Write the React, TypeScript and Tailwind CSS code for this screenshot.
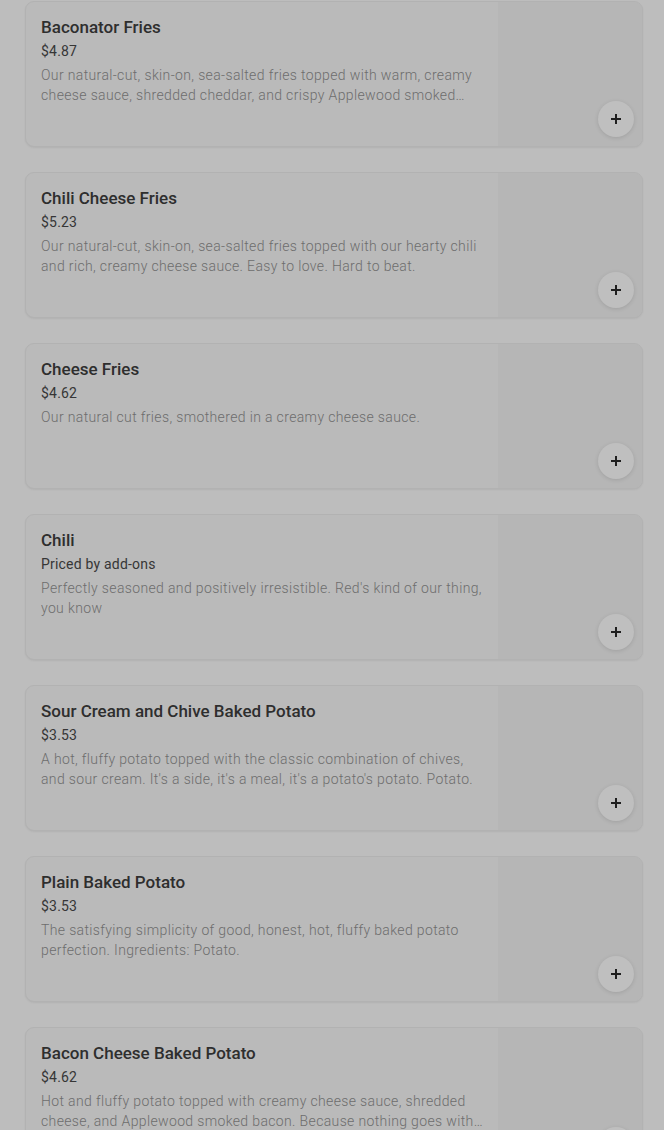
import React from 'react';

const items = [
  {
    name: 'Baconator Fries',
    price: '$4.87',
    desc: 'Our natural-cut, skin-on, sea-salted fries topped with warm, creamy cheese sauce, shredded cheddar, and crispy Applewood smoked bacon. Because nothing goes with fries like bacon.',
  },
  {
    name: 'Chili Cheese Fries',
    price: '$5.23',
    desc: 'Our natural-cut, skin-on, sea-salted fries topped with our hearty chili and rich, creamy cheese sauce. Easy to love. Hard to beat.',
  },
  {
    name: 'Cheese Fries',
    price: '$4.62',
    desc: 'Our natural cut fries, smothered in a creamy cheese sauce.',
  },
  {
    name: 'Chili',
    price: 'Priced by add-ons',
    desc: "Perfectly seasoned and positively irresistible. Red's kind of our thing, you know",
  },
  {
    name: 'Sour Cream and Chive Baked Potato',
    price: '$3.53',
    desc: "A hot, fluffy potato topped with the classic combination of chives, and sour cream. It's a side, it's a meal, it's a potato's potato. Potato.",
  },
  {
    name: 'Plain Baked Potato',
    price: '$3.53',
    desc: 'The satisfying simplicity of good, honest, hot, fluffy baked potato perfection. Ingredients: Potato.',
  },
  {
    name: 'Bacon Cheese Baked Potato',
    price: '$4.62',
    desc: 'Hot and fluffy potato topped with creamy cheese sauce, shredded cheese, and Applewood smoked bacon. Because nothing goes with potatoes like bacon.',
  },
];

export default function App() {
  return (
    <div className="h-[1130px] overflow-hidden bg-[#bdbdbd] pl-[25px] pr-[21px] pt-px font-['Roboto',sans-serif] flex flex-col gap-[25px]">
      {items.map((item) => (
        <div
          key={item.name}
          className="flex h-[146px] shrink-0 rounded-[9px] border border-[#b2b2b2] bg-[#bababa] overflow-hidden shadow-[0_1px_2px_rgba(0,0,0,0.06)]"
        >
          <div className="flex-1 min-w-0 pl-[15px] pr-[14px] pt-[14px]">
            <h3 className="text-[17px] leading-[22px] font-medium text-[#2e2e2e]">{item.name}</h3>
            <p className="mt-[3px] text-[14px] leading-[20px] tracking-[0.2px] text-[#363636]">{item.price}</p>
            <p className="mt-1 text-[14px] leading-[20px] tracking-[0.36px] font-light text-[#6d6d6d] line-clamp-2">
              {item.desc}
            </p>
          </div>
          <div className="relative w-[144px] shrink-0 bg-[#b6b6b6]">
            <button className="absolute right-[8px] bottom-[9px] w-9 h-9 rounded-full bg-[#bfbfbf] shadow-[0_1px_4px_rgba(0,0,0,0.12)] flex items-center justify-center">
              <svg width="12" height="12" viewBox="0 0 12 12">
                <path d="M6 1v10M1 6h10" stroke="#1f1f1f" strokeWidth="2" />
              </svg>
            </button>
          </div>
        </div>
      ))}
    </div>
  );
}
